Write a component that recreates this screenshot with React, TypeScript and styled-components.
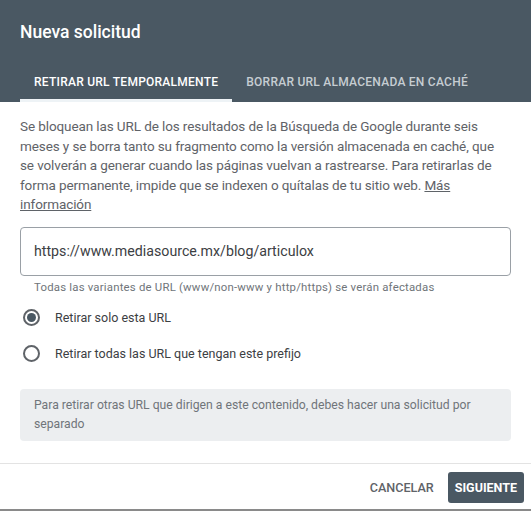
import React, { useState } from "react";
import styled, { createGlobalStyle } from "styled-components";

const GlobalStyle = createGlobalStyle`
  html, body {
    margin: 0;
    padding: 0;
    background: #ffffff;
  }
  body {
    font-family: Roboto, "Noto Sans", Arial, sans-serif;
    -webkit-font-smoothing: antialiased;
  }
`;

const Dialog = styled.div`
  width: 531px;
  height: 511px;
  display: flex;
  flex-direction: column;
  background: #ffffff;
  border-bottom: 2px solid #8a8a8a;
  box-sizing: border-box;
  overflow: hidden;
`;

const Header = styled.div`
  background: #4a5863;
  padding: 20px 0 0 20px;
  display: flex;
  flex-direction: column;
  gap: 16px;
`;

const Title = styled.h1`
  margin: 0;
  font-size: 17.5px;
  line-height: 24px;
  font-weight: 500;
  color: #ffffff;
`;

const Tabs = styled.div`
  display: flex;
`;

const Tab = styled.button<{ $active?: boolean }>`
  border: none;
  background: transparent;
  padding: 14px 14px 9px;
  border-bottom: 3px solid ${(p) => (p.$active ? "#eef3f6" : "transparent")};
  font-family: Roboto, Arial, sans-serif;
  font-size: 12px;
  line-height: 16px;
  font-weight: 500;
  letter-spacing: 0.25px;
  text-transform: uppercase;
  color: ${(p) => (p.$active ? "#ffffff" : "#c6cdd2")};
  cursor: pointer;
`;

const Body = styled.div`
  flex: 1;
  padding: 15px 20px 0;
  display: flex;
  flex-direction: column;
`;

const Intro = styled.p`
  margin: 0;
  font-size: 13.5px;
  line-height: 19.6px;
  letter-spacing: -0.1px;
  color: #5f6368;

  a {
    color: #5f6368;
    text-decoration: underline;
  }
`;

const UrlInput = styled.input`
  margin-top: 12px;
  height: 49px;
  box-sizing: border-box;
  border: 1px solid #9aa0a6;
  border-radius: 4px;
  padding: 0 13px;
  font-family: Roboto, Arial, sans-serif;
  font-size: 14.2px;
  color: #3c4043;
  outline: none;
`;

const Helper = styled.div`
  margin: 4px 0 0 14px;
  font-size: 11.4px;
  line-height: 14px;
  color: #70757a;
  letter-spacing: 0.2px;
`;

const RadioGroup = styled.div`
  margin-top: 6px;
  display: flex;
  flex-direction: column;
`;

const RadioRow = styled.label`
  height: 36px;
  display: flex;
  align-items: center;
  gap: 15px;
  padding-left: 3px;
  font-size: 12.5px;
  color: #3c4043;
  cursor: pointer;
`;

const RadioCircle = styled.span<{ $checked: boolean }>`
  width: 17px;
  height: 17px;
  box-sizing: border-box;
  border-radius: 50%;
  border: 2px solid #5f6368;
  display: flex;
  align-items: center;
  justify-content: center;

  &::after {
    content: "";
    width: 9px;
    height: 9px;
    border-radius: 50%;
    background: ${(p) => (p.$checked ? "#4a5863" : "transparent")};
  }
`;

const InfoBox = styled.div`
  margin-top: 17px;
  background: #eceef0;
  border-radius: 4px;
  padding: 7px 14px;
  font-size: 12.2px;
  line-height: 19px;
  color: #70757a;
`;

const Footer = styled.div`
  border-top: 1px solid #e3e3e3;
  padding: 8px 7px 6px;
  display: flex;
  justify-content: flex-end;
  align-items: center;
  gap: 7px;
`;

const FooterButton = styled.button<{ $primary?: boolean }>`
  height: 31px;
  padding: 0 7px;
  border: none;
  border-radius: 3px;
  background: ${(p) => (p.$primary ? "#4a5863" : "transparent")};
  color: ${(p) => (p.$primary ? "#ffffff" : "#5f6368")};
  font-family: Roboto, Arial, sans-serif;
  font-size: ${(p) => (p.$primary ? "12.5px" : "12.6px")};
  font-weight: ${(p) => (p.$primary ? 700 : 500)};
  text-transform: uppercase;
  cursor: pointer;
`;

const options = [
  "Retirar solo esta URL",
  "Retirar todas las URL que tengan este prefijo",
];

export default function App() {
  const [tab, setTab] = useState(0);
  const [choice, setChoice] = useState(0);

  return (
    <>
      <GlobalStyle />
      <Dialog>
        <Header>
          <Title>Nueva solicitud</Title>
          <Tabs>
            <Tab $active={tab === 0} onClick={() => setTab(0)}>
              Retirar URL temporalmente
            </Tab>
            <Tab $active={tab === 1} onClick={() => setTab(1)}>
              Borrar URL almacenada en caché
            </Tab>
          </Tabs>
        </Header>
        <Body>
          <Intro>
            Se bloquean las URL de los resultados de la Búsqueda de Google
            durante seis meses y se borra tanto su fragmento como la versión
            almacenada en caché, que se volverán a generar cuando las páginas
            vuelvan a rastrearse. Para retirarlas de forma permanente, impide
            que se indexen o quítalas de tu sitio web. <a href="#">Más información</a>
          </Intro>
          <UrlInput defaultValue="https://www.mediasource.mx/blog/articulox" />
          <Helper>
            Todas las variantes de URL (www/non-www y http/https) se verán
            afectadas
          </Helper>
          <RadioGroup>
            {options.map((label, i) => (
              <RadioRow key={i} onClick={() => setChoice(i)}>
                <RadioCircle $checked={choice === i} />
                {label}
              </RadioRow>
            ))}
          </RadioGroup>
          <InfoBox>
            Para retirar otras URL que dirigen a este contenido, debes hacer una
            solicitud por separado
          </InfoBox>
        </Body>
        <Footer>
          <FooterButton>Cancelar</FooterButton>
          <FooterButton $primary>Siguiente</FooterButton>
        </Footer>
      </Dialog>
    </>
  );
}
